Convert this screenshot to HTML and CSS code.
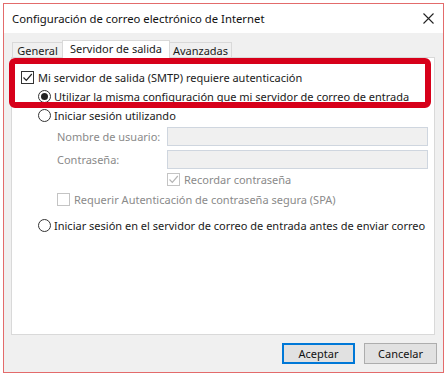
FILE: index.html
```html
<!DOCTYPE html>
<html lang="es">
<head>
    <meta charset="UTF-8">
    <title>Configuración de correo electrónico de Internet</title>
    <link rel="stylesheet" href="styles.css">
</head>
<body>
    <div class="window">
        <div class="titlebar">
            <span class="title">Configuración de correo electrónico de Internet</span>
            <svg class="close" width="11" height="11" viewBox="0 0 11 11">
                <path d="M0.5 0.5 L10.5 10.5 M10.5 0.5 L0.5 10.5" stroke="#222" stroke-width="1.1" fill="none"/>
            </svg>
        </div>
        <div class="content">
            <!-- tabs -->
            <div class="tabs">
                <div class="tab tab-general">General</div>
                <div class="tab tab-active">Servidor de salida</div>
                <div class="tab tab-adv">Avanzadas</div>
            </div>
            <div class="panel">
                <div class="row row-first">
                    <span class="check">
                        <svg width="11" height="11" viewBox="0 0 11 11"><path d="M1.5 5.5 L4.3 8.3 L9.8 2" stroke="#222" stroke-width="1.2" fill="none"/></svg>
                    </span>
                    <span class="text">Mi servidor de salida (SMTP) requiere autenticación</span>
                </div>
                <div class="row row-radio">
                    <span class="radio on"></span>
                    <span class="text">Utilizar la misma configuración que mi servidor de correo de entrada</span>
                </div>
                <div class="row row-radio">
                    <span class="radio"></span>
                    <span class="text">Iniciar sesión utilizando</span>
                </div>
                <!-- disabled fields -->
                <div class="field field-user">
                    <label class="field-label">Nombre de usuario:</label>
                    <div class="input"></div>
                </div>
                <div class="field field-pass">
                    <label class="field-label">Contraseña:</label>
                    <div class="input"></div>
                </div>
                <div class="row row-remember">
                    <span class="check disabled">
                        <svg width="11" height="11" viewBox="0 0 11 11"><path d="M1.5 5.5 L4.3 8.3 L9.8 2" stroke="#b5b5b5" stroke-width="1.2" fill="none"/></svg>
                    </span>
                    <span class="text muted">Recordar contraseña</span>
                </div>
                <div class="row row-spa">
                    <span class="check disabled"></span>
                    <span class="text muted">Requerir Autenticación de contraseña segura (SPA)</span>
                </div>
                <div class="row row-radio row-last">
                    <span class="radio"></span>
                    <span class="text">Iniciar sesión en el servidor de correo de entrada antes de enviar correo</span>
                </div>
                <div class="highlight"></div>
            </div>
            <div class="buttons">
                <button class="btn btn-default">Aceptar</button>
                <button class="btn">Cancelar</button>
            </div>
        </div>
    </div>
</body>
</html>
```

FILE: styles.css
```css
* {
    margin: 0;
    padding: 0;
    box-sizing: border-box;
}
body {
    font-family: "Noto Sans", "Open Sans", sans-serif;
    font-size: 11px;
    color: #1a1a1a;
    background: #fff;
    width: 448px;
    height: 375px;
    overflow: hidden;
}
.window {
    margin: 3px 0 0 3px;
    width: 441px;
    height: 370px;
    border: 1px solid #e36b6b;
    display: flex;
    flex-direction: column;
}
.titlebar {
    height: 29px;
    background: #fff;
    display: flex;
    align-items: center;
    justify-content: space-between;
    padding: 0 9px 0 8px;
}
.title {
    font-size: 11.3px;
    color: #111;
}
.content {
    flex: 1;
    background: #f0f0f0;
    padding: 7px 6px 8px 7px;
    display: flex;
    flex-direction: column;
}
.tabs {
    display: flex;
    align-items: flex-end;
    height: 17px;
    padding-left: 1px;
}
.tab {
    height: 15px;
    border: 1px solid #d9d9d9;
    border-bottom: none;
    background: #f0f0f0;
    line-height: 15px;
    text-align: center;
    white-space: nowrap;
}
.tab-general {
    width: 50px;
    border-right: none;
}
.tab-active {
    width: 108px;
    height: 18px;
    margin-bottom: -1px;
    background: #fff;
    position: relative;
    z-index: 1;
    line-height: 15px;
}
.tab-adv {
    width: 62px;
    border-left: none;
}
.panel {
    height: 278px;
    width: 424px;
    border: 1px solid #d9d9d9;
    background: #fff;
    padding: 10px 6px 0 9px;
    position: relative;
}
.row {
    display: flex;
    align-items: center;
    height: 19px;
}
.row-radio {
    padding-left: 17px;
}
.row-radio .text {
    margin-left: 3px;
}
.check {
    width: 13px;
    height: 13px;
    border: 1px solid #333;
    background: #fff;
    display: flex;
    align-items: center;
    justify-content: center;
    flex: none;
}
.check.disabled {
    border-color: #c4c4c4;
}
.check + .text {
    margin-left: 4px;
}
.radio {
    width: 13px;
    height: 13px;
    border: 1px solid #333;
    border-radius: 50%;
    display: flex;
    align-items: center;
    justify-content: center;
    flex: none;
}
.radio.on::after {
    content: "";
    width: 7px;
    height: 7px;
    border-radius: 50%;
    background: #222;
}
.text {
    white-space: nowrap;
}
.muted, .field-label {
    color: #8a8a8a;
}
.field {
    display: flex;
    align-items: center;
    height: 19px;
    padding-left: 36px;
}
.field-user {
    margin-top: 2px;
}
.field-pass {
    margin-top: 4px;
}
.field-label {
    width: 110px;
    white-space: nowrap;
}
.input {
    flex: 1;
    height: 19px;
    background: #f0f0f0;
    border: 1px solid #cfd6df;
}
.row-remember {
    height: 21px;
    padding-left: 146px;
}
.row-spa {
    height: 18px;
    padding-left: 36px;
}
.row-last {
    margin-top: 8px;
}
.highlight {
    position: absolute;
    left: -3px;
    top: 0;
    width: 422px;
    height: 50px;
    border: 6px solid #d7001a;
    border-radius: 6px;
}
.buttons {
    display: flex;
    justify-content: flex-end;
    gap: 9px;
    margin-top: 8px;
}
.btn {
    font-family: inherit;
    font-size: 11px;
    width: 73px;
    height: 21px;
    background: #e1e1e1;
    border: 1px solid #adadad;
    color: #111;
}
.btn-default {
    border: 2px solid #0078d7;
}
```
